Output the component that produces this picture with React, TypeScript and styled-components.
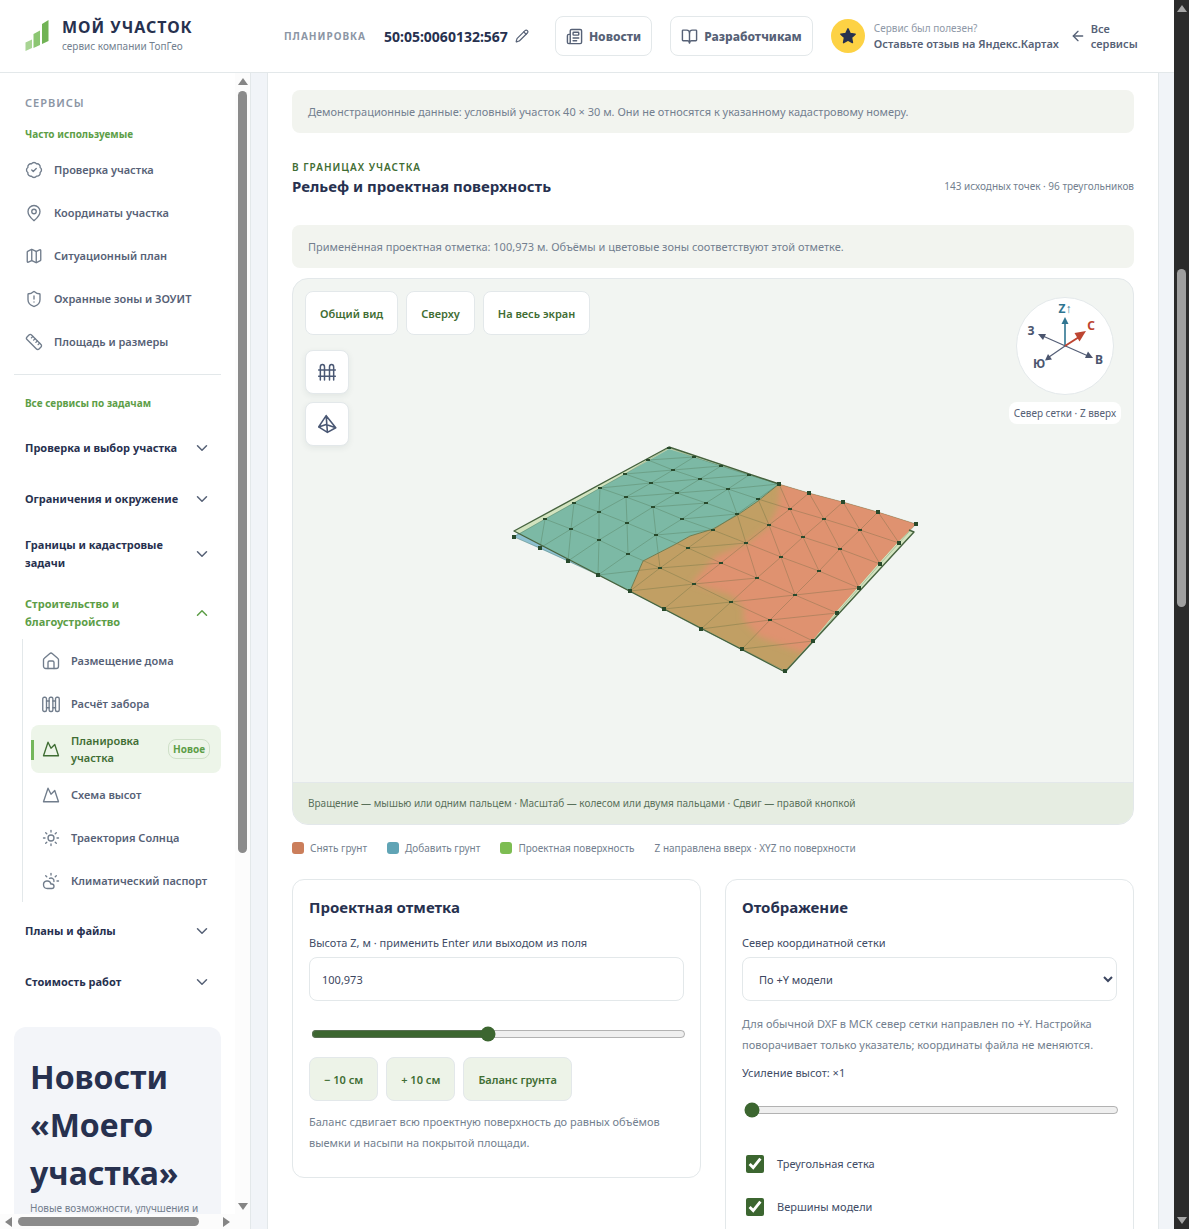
import React, { useState } from "react";
import styled, { createGlobalStyle, css } from "styled-components";
import {
  ArrowLeft,
  BadgeCheck,
  BookOpen,
  ChevronDown,
  ChevronUp,
  CloudSun,
  Map as MapIcon,
  MapPin,
  Mountain,
  Newspaper,
  Pencil,
  Ruler,
  ShieldAlert,
  Sun,
} from "lucide-react";

const ink = "#27314f";
const slate = "#566176";
const muted = "#737f8f";
const line = "#e3e8ea";
const leaf = "#5d9e47";
const forest = "#3f6d33";

const GlobalStyle = createGlobalStyle`
  *, *::before, *::after { box-sizing: border-box; }
  body {
    margin: 0;
    font-family: "Noto Sans", "Open Sans", sans-serif;
    font-size: 11px;
    color: ${ink};
    background: #f1f4f8;
    overflow: hidden;
  }
  button, input, select { font: inherit; color: inherit; }
  h1, h2, h3, p { margin: 0; }
`;

const Shell = styled.div`
  display: flex;
  height: 100vh;
`;

const Page = styled.div`
  flex: 1;
  min-width: 0;
  display: flex;
  flex-direction: column;
`;

/* ---------- scroll bars ---------- */

const Track = styled.div<{ $dark?: boolean; $row?: boolean }>`
  display: flex;
  flex-direction: ${(p) => (p.$row ? "row" : "column")};
  align-items: center;
  flex: none;
  gap: 6px;
  padding: ${(p) => (p.$row ? "0 5px" : "5px 0")};
  background: ${(p) => (p.$dark ? "#2b2b2b" : "#fcfcfc")};
  ${(p) => (p.$row ? "height: 15px;" : "width: 15px;")}
`;

const Thumb = styled.div<{ $dark?: boolean; $row?: boolean; $size: number }>`
  border-radius: 5px;
  background: ${(p) => (p.$dark ? "#9f9f9f" : "#8b8b8b")};
  ${(p) =>
    p.$row
      ? css`height: 9px; flex: ${p.$size} 0 0;`
      : css`width: 9px; flex: ${p.$size} 0 0;`}
`;

const Rest = styled.div<{ $size: number }>`
  flex: ${(p) => p.$size} 0 0;
`;

const Arrow = styled.div<{ $dir: "up" | "down" | "left" | "right"; $dark?: boolean }>`
  flex: none;
  border: 5px solid transparent;
  ${(p) => {
    const c = p.$dark ? "#a5a5a5" : "#858585";
    if (p.$dir === "up") return `border-top: 0; border-bottom: 7px solid ${c};`;
    if (p.$dir === "down") return `border-bottom: 0; border-top: 7px solid ${c};`;
    if (p.$dir === "left") return `border-left: 0; border-right: 7px solid ${c};`;
    return `border-right: 0; border-left: 7px solid ${c};`;
  }}
`;

/* ---------- header ---------- */

const Header = styled.header`
  display: flex;
  align-items: center;
  height: 73px;
  flex: none;
  padding: 0 24px;
  background: #fff;
  border-bottom: 1px solid ${line};
`;

const Brand = styled.a`
  display: flex;
  align-items: center;
  gap: 12px;
  width: 260px;
  flex: none;
  text-decoration: none;
  color: ${ink};
`;

const BrandName = styled.span`
  display: block;
  font-size: 16px;
  line-height: 20px;
  font-weight: 700;
  letter-spacing: 1px;
`;

const BrandNote = styled.span`
  display: block;
  font-size: 10px;
  line-height: 18px;
  color: ${muted};
`;

const Crumb = styled.span`
  font-size: 10px;
  font-weight: 700;
  letter-spacing: 1px;
  color: #8c96a5;
`;

const Cadastral = styled.strong`
  margin-left: 18px;
  font-size: 14px;
  color: ${ink};
`;

const IconButton = styled.button`
  display: grid;
  place-items: center;
  margin: 0 26px 0 7px;
  padding: 0;
  border: 0;
  background: none;
  color: ${slate};
`;

const HeaderLink = styled.a`
  display: flex;
  align-items: center;
  gap: 6px;
  height: 40px;
  margin-right: 18px;
  padding: 0 10px;
  border: 1px solid ${line};
  border-radius: 8px;
  color: ${slate};
  font-size: 12px;
  font-weight: 800;
  text-decoration: none;
`;

const Review = styled.a`
  display: flex;
  align-items: center;
  gap: 9px;
  color: ${slate};
  text-decoration: none;
  white-space: nowrap;
`;

const StarDisc = styled.span`
  display: grid;
  place-items: center;
  width: 34px;
  height: 34px;
  border-radius: 50%;
  background: #fdd244;
`;

const ReviewAsk = styled.span`
  display: block;
  font-size: 10px;
  line-height: 15px;
  color: #8f99a8;
`;

const ReviewText = styled.span`
  display: block;
  font-size: 11px;
  line-height: 15px;
  font-weight: 600;
`;

const BackLink = styled.a`
  display: flex;
  align-items: center;
  gap: 5px;
  margin-left: 11px;
  width: 72px;
  font-size: 11px;
  line-height: 15px;
  font-weight: 600;
  color: ${slate};
  text-decoration: none;

  svg { flex: none; }
`;

/* ---------- side bar ---------- */

const Body = styled.div`
  flex: 1;
  min-height: 0;
  display: flex;
`;

const Side = styled.aside`
  display: flex;
  width: 251px;
  flex: none;
  background: #fff;
  border-right: 1px solid ${line};
`;

const SideMain = styled.div`
  flex: 1;
  min-width: 0;
  display: flex;
  flex-direction: column;
`;

const SideScroll = styled.nav`
  flex: 1;
  min-height: 0;
  overflow: hidden;
  padding: 20px 14px 0;
`;

const SideTitle = styled.div`
  padding-left: 11px;
  font-size: 11px;
  line-height: 19px;
  font-weight: 600;
  letter-spacing: 1px;
  color: #8c96a5;
`;

const SideCaption = styled.div<{ $tight?: boolean }>`
  padding: 14px 0 ${(p) => (p.$tight ? "6px" : "15px")} 11px;
  font-size: 10px;
  line-height: 16px;
  font-weight: 700;
  color: ${leaf};
`;

const Divider = styled.hr`
  margin: 11px 0 6px;
  border: 0;
  border-top: 1px solid ${line};
`;

const NavItem = styled.a<{ $active?: boolean }>`
  position: relative;
  display: flex;
  align-items: center;
  gap: 11px;
  min-height: ${(p) => (p.$active ? "48px" : "43px")};
  padding: 0 11px;
  border-radius: 8px;
  font-size: 11px;
  line-height: 17px;
  font-weight: 600;
  text-decoration: none;
  color: ${(p) => (p.$active ? forest : slate)};
  background: ${(p) => (p.$active ? "#edf5e9" : "transparent")};

  svg { flex: none; color: ${(p) => (p.$active ? forest : "#717d8c")}; }

  &::before {
    content: "";
    display: ${(p) => (p.$active ? "block" : "none")};
    position: absolute;
    left: 0;
    top: 15px;
    bottom: 13px;
    width: 3px;
    background: #74b75b;
  }
`;

const Badge = styled.span`
  margin-left: auto;
  padding: 0 4px;
  border: 1px solid #cfe0c8;
  border-radius: 8px;
  font-size: 10px;
  line-height: 18px;
  font-weight: 700;
  color: ${leaf};
`;

const Groups = styled.div`
  display: flex;
  flex-direction: column;
  gap: 7px;
`;

const GroupButton = styled.button<{ $open?: boolean }>`
  display: flex;
  align-items: center;
  justify-content: space-between;
  gap: 4px;
  width: 100%;
  min-height: 44px;
  padding: 8px 10px 8px 11px;
  border: 0;
  background: none;
  font-size: 11px;
  line-height: 18px;
  font-weight: 700;
  text-align: left;
  color: ${(p) => (p.$open ? leaf : ink)};

  svg { flex: none; color: ${(p) => (p.$open ? leaf : slate)}; }
`;

const SubList = styled.div`
  margin-left: 8px;
  padding-left: 8px;
  border-left: 1px solid ${line};
`;

const NewsCard = styled.section`
  margin-top: 23px;
  padding: 26px 16px;
  border-radius: 12px;
  background: #f3f5f9;
`;

const NewsTitle = styled.h2`
  font-size: 32px;
  line-height: 48px;
  font-weight: 700;
`;

const NewsText = styled.p`
  margin-top: 3px;
  font-size: 10px;
  line-height: 16px;
  color: ${muted};
  white-space: nowrap;
`;

/* ---------- content ---------- */

const Main = styled.main`
  flex: 1;
  min-width: 0;
  overflow: hidden;
  padding: 0 15px 0 16px;
`;

const Sheet = styled.div`
  min-height: 100%;
  padding: 17px 24px 0;
  background: #fff;
  border: 1px solid ${line};
  border-width: 0 1px;
`;

const Notice = styled.p`
  padding: 11px 16px;
  border-radius: 8px;
  background: #f2f4ef;
  font-size: 11px;
  line-height: 21px;
  color: ${muted};
`;

const SectionHead = styled.div`
  display: flex;
  align-items: flex-end;
  justify-content: space-between;
  padding: 26px 0 28px;
`;

const Eyebrow = styled.p`
  font-size: 10px;
  line-height: 16px;
  font-weight: 600;
  letter-spacing: 1px;
  color: ${forest};
`;

const SectionTitle = styled.h1`
  font-size: 15px;
  line-height: 22px;
  font-weight: 700;
`;

const Stats = styled.p`
  font-size: 10px;
  line-height: 22px;
  color: ${muted};
`;

const Viewer = styled.section`
  margin-top: 10px;
  border: 1px solid ${line};
  border-radius: 16px;
  background: #f2f5f2;
  overflow: hidden;
`;

const Stage = styled.div`
  position: relative;
  height: 503px;
`;

const Scene = styled.svg`
  display: block;
  width: 100%;
  height: 100%;
`;

const Toolbar = styled.div`
  position: absolute;
  top: 12px;
  left: 12px;
  display: grid;
  gap: 15px;
`;

const Tools = styled.div<{ $column?: boolean }>`
  display: flex;
  flex-direction: ${(p) => (p.$column ? "column" : "row")};
  gap: 8px;
`;

const ViewButton = styled.button`
  height: 44px;
  padding: 0 14px;
  border: 1px solid ${line};
  border-radius: 8px;
  background: #fff;
  font-size: 11px;
  font-weight: 600;
  color: ${forest};
`;

const SquareButton = styled.button`
  display: grid;
  place-items: center;
  width: 44px;
  height: 44px;
  padding: 0;
  border: 1px solid ${line};
  border-radius: 8px;
  background: #fff;
  color: #4a5874;
  box-shadow: 0 2px 6px rgba(40, 60, 60, 0.08);
`;

const CompassBox = styled.div`
  position: absolute;
  top: 17px;
  right: 12px;
  display: flex;
  flex-direction: column;
  align-items: center;
  gap: 6px;
`;

const CompassNote = styled.span`
  padding: 3px 5px;
  border-radius: 8px;
  background: #fff;
  font-size: 10px;
  line-height: 16px;
  color: ${slate};
`;

const Hint = styled.p`
  padding: 10px 15px;
  border-top: 1px solid ${line};
  background: #e6ede2;
  font-size: 10px;
  line-height: 21px;
  color: #59705a;
`;

const Legend = styled.ul`
  display: flex;
  flex-wrap: wrap;
  gap: 20px;
  margin: 13px 0 21px;
  padding: 0;
  list-style: none;
  font-size: 10px;
  line-height: 20px;
  color: ${muted};
`;

const LegendItem = styled.li`
  display: flex;
  align-items: center;
  gap: 6px;
`;

const Swatch = styled.span<{ $color: string }>`
  width: 12px;
  height: 12px;
  border-radius: 3px;
  background: ${(p) => p.$color};
`;

const Panels = styled.div`
  display: grid;
  grid-template-columns: 1fr 1fr;
  align-items: start;
  gap: 24px;
`;

const Panel = styled.section`
  padding: 15px 16px 16px;
  border: 1px solid ${line};
  border-radius: 12px;
`;

const PanelTitle = styled.h2`
  margin-bottom: 14px;
  font-size: 15px;
  line-height: 24px;
  font-weight: 700;
`;

const FieldLabel = styled.label`
  display: block;
  font-size: 11px;
  line-height: 20px;
  color: #414c66;
`;

const fieldBox = css`
  display: block;
  width: 100%;
  height: 44px;
  margin-top: 4px;
  padding: 0 12px;
  border: 1px solid ${line};
  border-radius: 8px;
  background: #fff;
  font-size: 11px;
  color: #3c4660;
`;

const TextField = styled.input`${fieldBox}`;
const SelectField = styled.select`${fieldBox}`;

const Range = styled.input<{ $tight?: boolean }>`
  display: block;
  width: 100%;
  height: 16px;
  margin: ${(p) => (p.$tight ? "19px" : "25px")} 2px 15px;
  accent-color: #3c6630;
`;

const Actions = styled.div`
  display: flex;
  gap: 8px;
`;

const ActionButton = styled.button`
  height: 44px;
  padding: 0 14px;
  border: 1px solid ${line};
  border-radius: 8px;
  background: #edf3e8;
  font-size: 11px;
  font-weight: 600;
  color: ${forest};
`;

const Help = styled.p<{ $loose?: boolean }>`
  margin: ${(p) => (p.$loose ? "12px" : "10px")} 0 8px;
  font-size: 11px;
  line-height: 21px;
  color: ${muted};
`;

const Check = styled.label`
  display: flex;
  align-items: center;
  gap: 10px;
  height: 43px;
  font-size: 11px;
  color: #414c66;

  input {
    width: 18px;
    height: 18px;
    accent-color: #3c6630;
  }
`;

const Checks = styled.div`
  padding-top: 9px;
`;

/* ---------- drawings ---------- */

const strokeProps = {
  fill: "none",
  stroke: "currentColor",
  strokeLinecap: "round" as const,
  strokeLinejoin: "round" as const,
};

const Logo = () => (
  <svg width="26" height="34" viewBox="0 0 26 34" aria-hidden="true">
    <path d="M1.500 23.500 8 20.500V29L1.500 32z" fill="#a8d493" />
    <path d="M9.500 15 16 11.500V26l-6.500 3z" fill="#8cc672" />
    <path d="M18 5 24.500 1v21L18 25z" fill="#71b355" />
  </svg>
);

const HomeIcon = () => (
  <svg width="18" height="18" viewBox="0 0 24 24" strokeWidth="1.800" {...strokeProps}>
    <path d="M2 10.500a3 3 0 0 1 1.100-2.300l7-6a3 3 0 0 1 3.800 0l7 6A3 3 0 0 1 22 10.500V19a3 3 0 0 1-3 3H5a3 3 0 0 1-3-3z" />
    <path d="M8 22v-8a2 2 0 0 1 2-2h4a2 2 0 0 1 2 2v8" />
  </svg>
);

const FenceIcon = () => (
  <svg width="18" height="18" viewBox="0 0 24 24" strokeWidth="1.800" {...strokeProps}>
    <rect x="1" y="3" width="5" height="19" rx="2" />
    <rect x="9.500" y="3" width="5" height="19" rx="2" />
    <rect x="18" y="3" width="5" height="19" rx="2" />
    <path d="M6 8h3.500M6 17h3.500M14.500 8H18M14.500 17H18" />
  </svg>
);

const PicketIcon = () => (
  <svg width="20" height="20" viewBox="0 0 24 24" strokeWidth="1.800" {...strokeProps}>
    <path d="M4 21.500V6a2.500 3 0 0 1 5 0v15.500M15 21.500V6a2.500 3 0 0 1 5 0v15.500M2 9.500h20M2 17h20" />
  </svg>
);

const PyramidIcon = () => (
  <svg width="20" height="20" viewBox="0 0 24 24" strokeWidth="1.900" {...strokeProps}>
    <path d="M11 2 2 15.500 12.500 22 22.500 16.500zM11 2l1.500 20M2 15.500l9-3 11.500 4" />
  </svg>
);

const mesh: [number, number][][] = [
  [[669, 448], [694, 457], [721, 466], [749, 475], [779, 484], [809, 493], [843, 502], [878, 512], [916, 524]],
  [[648, 460], [673, 470], [700, 479], [728, 489], [758, 499], [790, 509], [824, 519], [860, 530], [899, 543]],
  [[625, 474], [651, 483], [677, 493], [706, 503], [737, 514], [769, 525], [803, 537], [840, 549], [880, 564]],
  [[600, 488], [626, 497], [653, 507], [682, 519], [713, 530], [746, 543], [781, 557], [819, 571], [859, 588]],
  [[574, 503], [599, 512], [627, 523], [656, 535], [688, 548], [721, 563], [757, 578], [795, 595], [837, 613]],
  [[545, 519], [571, 529], [599, 540], [628, 554], [660, 568], [694, 584], [731, 602], [770, 620], [813, 641]],
  [[514, 537], [540, 548], [568, 561], [598, 575], [630, 591], [664, 609], [701, 629], [742, 649], [785, 671]],
];

// Diagonal of each cell: "a" runs to the next row and column, "b" crosses it.
const diagonals = ["bbbbaaaa", "bbbaaaaa", "bbbbaaaa", "aaabbaab", "aaaabbbb", "aaabbbbb"];

const meshPath = () => {
  const parts: string[] = [];
  const seg = (p: number[], q: number[]) => parts.push(`M${p[0]} ${p[1]}L${q[0]} ${q[1]}`);
  mesh.forEach((row, j) =>
    row.forEach((p, i) => {
      if (i < 8) seg(p, row[i + 1]);
      if (j < 6) seg(p, mesh[j + 1][i]);
      if (i < 8 && j < 6) {
        if (diagonals[j][i] === "a") seg(p, mesh[j + 1][i + 1]);
        else seg(row[i + 1], mesh[j + 1][i]);
      }
    })
  );
  return parts.join("");
};

const Terrain = () => (
  <Scene viewBox="293 279 840 503" role="img" aria-label="Рельеф участка">
    <defs>
      <filter id="soft" x="-5%" y="-5%" width="110%" height="110%">
        <feGaussianBlur stdDeviation="3" />
      </filter>
      <clipPath id="cutZone">
        <path d="M779 484 809 493 843 502 878 512 916 524 897 543 878 564 857 588 835 613 812 641 785 671 630 591 643 561 674 545 690 536 713 529 739 514 758 501z" />
      </clipPath>
    </defs>
    <path d="M514 537 598 575 630 591 518 533z" fill="#8dc0d0" />
    <path d="M669 447 514 531 785 672 914 532 779 484z" fill="#d2e3bf" />
    <path d="M669 449 779 484 758 501 739 514 713 529 690 536 674 545 643 561 630 591 519 533.500z" fill="#7cb9a5" />
    <g clipPath="url(#cutZone)">
      <path d="M620 480h310v200H620z" fill="#c19f64" />
      <path
        d="M781 478 778 508 768 527 747 543 716 556 692 583 731 595 744 608 743 620 760 637 800 652 860 660 960 520z"
        fill="#df926f"
        filter="url(#soft)"
      />
    </g>
    <path d={meshPath()} fill="none" stroke="#3f5a32" strokeOpacity="0.320" strokeWidth="0.800" />
    <path d="M779 484 758 501 739 514 713 529 690 536 674 545 643 561 630 591" fill="none" stroke="#6f7d52" strokeWidth="1" />
    <path d="M779 484 669 447 514 531 785 672 914 532 909 530" fill="none" stroke="#46633f" strokeWidth="1.400" strokeLinejoin="round" />
    {mesh.flatMap((row, j) =>
      row.map(([x, y], i) => {
        const edge = j === 6 || i === 8 || (j === 0 && i > 3);
        return (
          <rect
            key={`${i}-${j}`}
            x={x - 2}
            y={y - (edge ? 2 : 1)}
            width="4"
            height={edge ? 4 : 2}
            fill="#284a2c"
          />
        );
      })
    )}
  </Scene>
);

const CompassText = styled.text`
  font-size: 12px;
  font-weight: 700;
  text-anchor: middle;
`;

const Compass = () => (
  <svg width="100" height="100" viewBox="1015 296 100 100" role="img" aria-label="Стороны света">
    <circle cx="1065" cy="346" r="48.500" fill="#fff" stroke={line} />
    <g stroke="#566078" strokeWidth="1.300">
      <path d="M1044 336.500 1087 355.500M1065 346l-16 11" />
    </g>
    <path d="M1065 346V322" stroke="#2f7591" strokeWidth="1.600" />
    <path d="M1065 346l14-9" stroke="#bd4531" strokeWidth="2" />
    <g fill="#4b556e">
      <path d="M1038 334l8 0-3 6z" />
      <path d="M1093 358l-8 0 3-6.500z" />
      <path d="M1045 360.500l3-6.500 4 5.500z" />
    </g>
    <path d="M1065 317l3.500 7h-7z" fill="#2f7591" />
    <path d="M1086 331l-6.500 10.500-5-8.500z" fill="#bd4531" />
    <CompassText x="1065" y="313" fill="#2f7591">Z↑</CompassText>
    <CompassText x="1091" y="330" fill="#bd4531">С</CompassText>
    <CompassText x="1031" y="335" fill="#4b556e">З</CompassText>
    <CompassText x="1099" y="364" fill="#4b556e">В</CompassText>
    <CompassText x="1039" y="368" fill="#4b556e">Ю</CompassText>
  </svg>
);

/* ---------- page ---------- */

const frequent = [
  { icon: BadgeCheck, text: "Проверка участка" },
  { icon: MapPin, text: "Координаты участка" },
  { icon: MapIcon, text: "Ситуационный план" },
  { icon: ShieldAlert, text: "Охранные зоны и ЗОУИТ" },
  { icon: Ruler, text: "Площадь и размеры" },
];

const Group = ({ text, open }: { text: string; open?: boolean }) => (
  <GroupButton type="button" $open={open} aria-expanded={!!open}>
    <span>{text}</span>
    {open ? <ChevronUp size={18} /> : <ChevronDown size={18} />}
  </GroupButton>
);

const Sidebar = () => (
  <Side>
    <SideMain>
      <SideScroll>
        <SideTitle>СЕРВИСЫ</SideTitle>
        <SideCaption $tight>Часто используемые</SideCaption>
        {frequent.map(({ icon: Icon, text }) => (
          <NavItem href="#" key={text}>
            <Icon size={18} strokeWidth={1.8} />
            {text}
          </NavItem>
        ))}
        <Divider />
        <SideCaption>Все сервисы по задачам</SideCaption>
        <Groups>
          <Group text="Проверка и выбор участка" />
          <Group text="Ограничения и окружение" />
          <Group text="Границы и кадастровые задачи" />
          <div>
            <Group text="Строительство и благоустройство" open />
            <SubList>
              <NavItem href="#"><HomeIcon />Размещение дома</NavItem>
              <NavItem href="#"><FenceIcon />Расчёт забора</NavItem>
              <NavItem href="#" $active aria-current="page">
                <Mountain size={18} strokeWidth={1.8} />
                Планировка участка
                <Badge>Новое</Badge>
              </NavItem>
              <NavItem href="#"><Mountain size={18} strokeWidth={1.8} />Схема высот</NavItem>
              <NavItem href="#"><Sun size={18} strokeWidth={1.8} />Траектория Солнца</NavItem>
              <NavItem href="#"><CloudSun size={18} strokeWidth={1.8} />Климатический паспорт</NavItem>
            </SubList>
          </div>
          <Group text="Планы и файлы" />
          <Group text="Стоимость работ" />
        </Groups>
        <NewsCard>
          <NewsTitle>Новости «Моего участка»</NewsTitle>
          <NewsText>Новые возможности, улучшения и</NewsText>
        </NewsCard>
      </SideScroll>
      <Track $row>
        <Arrow $dir="left" />
        <Thumb $row $size={181} />
        <Rest $size={12} />
        <Arrow $dir="right" />
      </Track>
    </SideMain>
    <Track>
      <Arrow $dir="up" />
      <Thumb $size={762} />
      <Rest $size={338} />
      <Arrow $dir="down" />
      <Rest $size={8} />
    </Track>
  </Side>
);

export default function App() {
  const [level, setLevel] = useState("100,973");
  const [offset, setOffset] = useState(47);
  const [gain, setGain] = useState(1);
  const [grid, setGrid] = useState(true);
  const [nodes, setNodes] = useState(true);

  return (
    <Shell>
      <GlobalStyle />
      <Page>
        <Header>
          <Brand href="#">
            <Logo />
            <span>
              <BrandName>МОЙ УЧАСТОК</BrandName>
              <BrandNote>сервис компании ТопГео</BrandNote>
            </span>
          </Brand>
          <Crumb>ПЛАНИРОВКА</Crumb>
          <Cadastral>50:05:0060132:567</Cadastral>
          <IconButton type="button" aria-label="Изменить номер"><Pencil size={14} /></IconButton>
          <HeaderLink href="#"><Newspaper size={17} />Новости</HeaderLink>
          <HeaderLink href="#"><BookOpen size={17} />Разработчикам</HeaderLink>
          <Review href="#">
            <StarDisc>
              <svg width="18" height="18" viewBox="0 0 24 24" fill="#27314f" stroke="#27314f" strokeWidth="2" strokeLinejoin="round">
                <path d="M12 2.500l2.900 6.100 6.600.9-4.800 4.600 1.200 6.700L12 17.600l-5.900 3.200 1.200-6.700L2.500 9.500l6.600-.9z" />
              </svg>
            </StarDisc>
            <span>
              <ReviewAsk>Сервис был полезен?</ReviewAsk>
              <ReviewText>Оставьте отзыв на Яндекс.Картах</ReviewText>
            </span>
          </Review>
          <BackLink href="#"><ArrowLeft size={16} /><span>Все сервисы</span></BackLink>
        </Header>
        <Body>
          <Sidebar />
          <Main>
            <Sheet>
              <Notice>Демонстрационные данные: условный участок 40 × 30 м. Они не относятся к указанному кадастровому номеру.</Notice>
              <SectionHead>
                <div>
                  <Eyebrow>В ГРАНИЦАХ УЧАСТКА</Eyebrow>
                  <SectionTitle>Рельеф и проектная поверхность</SectionTitle>
                </div>
                <Stats>143 исходных точек · 96 треугольников</Stats>
              </SectionHead>
              <Notice>Применённая проектная отметка: 100,973 м. Объёмы и цветовые зоны соответствуют этой отметке.</Notice>
              <Viewer>
                <Stage>
                  <Terrain />
                  <Toolbar>
                    <Tools>
                      <ViewButton type="button">Общий вид</ViewButton>
                      <ViewButton type="button">Сверху</ViewButton>
                      <ViewButton type="button">На весь экран</ViewButton>
                    </Tools>
                    <Tools $column>
                      <SquareButton type="button" aria-label="Забор"><PicketIcon /></SquareButton>
                      <SquareButton type="button" aria-label="Сетка"><PyramidIcon /></SquareButton>
                    </Tools>
                  </Toolbar>
                  <CompassBox>
                    <Compass />
                    <CompassNote>Север сетки · Z вверх</CompassNote>
                  </CompassBox>
                </Stage>
                <Hint>Вращение — мышью или одним пальцем · Масштаб — колесом или двумя пальцами · Сдвиг — правой кнопкой</Hint>
              </Viewer>
              <Legend>
                <LegendItem><Swatch $color="#cb7e5b" />Снять грунт</LegendItem>
                <LegendItem><Swatch $color="#60a4b5" />Добавить грунт</LegendItem>
                <LegendItem><Swatch $color="#7dbd52" />Проектная поверхность</LegendItem>
                <LegendItem>Z направлена вверх · XYZ по поверхности</LegendItem>
              </Legend>
              <Panels>
                <Panel>
                  <PanelTitle>Проектная отметка</PanelTitle>
                  <FieldLabel htmlFor="level">Высота Z, м · применить Enter или выходом из поля</FieldLabel>
                  <TextField id="level" value={level} onChange={(e) => setLevel(e.target.value)} />
                  <Range
                    type="range"
                    aria-label="Проектная отметка"
                    value={offset}
                    onChange={(e) => setOffset(Number(e.target.value))}
                  />
                  <Actions>
                    <ActionButton type="button">− 10 см</ActionButton>
                    <ActionButton type="button">+ 10 см</ActionButton>
                    <ActionButton type="button">Баланс грунта</ActionButton>
                  </Actions>
                  <Help>Баланс сдвигает всю проектную поверхность до равных объёмов выемки и насыпи на покрытой площади.</Help>
                </Panel>
                <Panel>
                  <PanelTitle>Отображение</PanelTitle>
                  <FieldLabel htmlFor="north">Север координатной сетки</FieldLabel>
                  <SelectField id="north" defaultValue="y">
                    <option value="y">По +Y модели</option>
                  </SelectField>
                  <Help $loose>Для обычной DXF в МСК север сетки направлен по +Y. Настройка поворачивает только указатель; координаты файла не меняются.</Help>
                  <FieldLabel htmlFor="gain">Усиление высот: ×{gain}</FieldLabel>
                  <Range
                    $tight
                    id="gain"
                    type="range"
                    min={1}
                    max={10}
                    value={gain}
                    onChange={(e) => setGain(Number(e.target.value))}
                  />
                  <Checks>
                    <Check><input type="checkbox" checked={grid} onChange={(e) => setGrid(e.target.checked)} />Треугольная сетка</Check>
                    <Check><input type="checkbox" checked={nodes} onChange={(e) => setNodes(e.target.checked)} />Вершины модели</Check>
                  </Checks>
                </Panel>
              </Panels>
            </Sheet>
          </Main>
        </Body>
      </Page>
      <Track $dark>
        <Arrow $dir="up" $dark />
        <Rest $size={246} />
        <Thumb $dark $size={340} />
        <Rest $size={601} />
        <Arrow $dir="down" $dark />
      </Track>
    </Shell>
  );
}
